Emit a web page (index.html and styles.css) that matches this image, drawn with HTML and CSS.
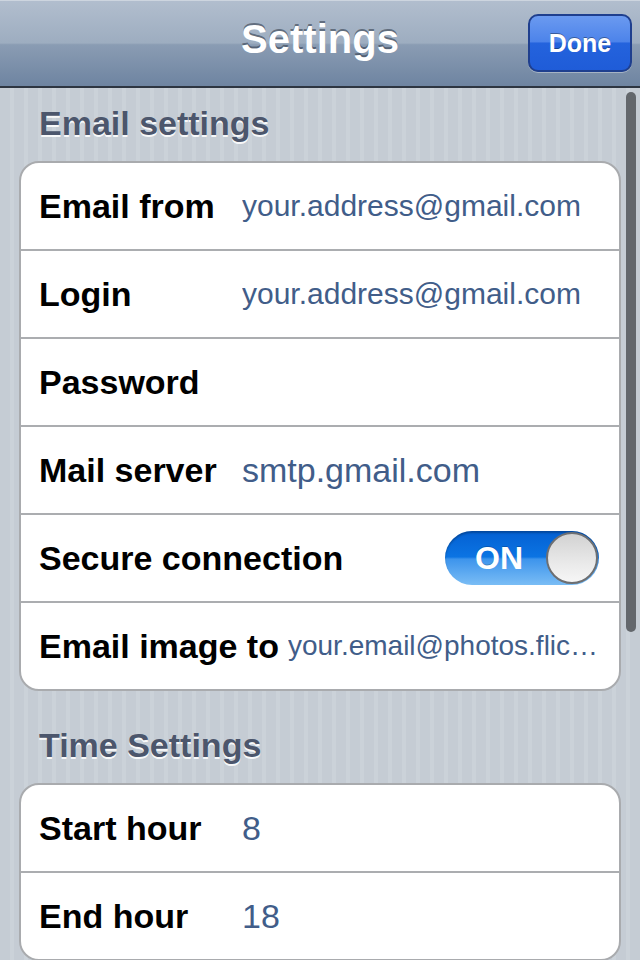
FILE: index.html
```html
<!DOCTYPE html>
<html lang="en">
<head>
<meta charset="utf-8">
<title>Settings</title>
<link rel="stylesheet" href="styles.css">
</head>
<body>
<header class="navbar">
  <span></span>
  <h1 class="nav-title">Settings</h1>
  <button class="done-btn">Done</button>
</header>
<main class="content">
  <section class="group">
    <h2 class="group-title">Email settings</h2>
    <ul class="card">
      <li class="row"><span class="label">Email from</span><span class="value value-fit">your.address@gmail.com</span></li>
      <li class="row"><span class="label">Login</span><span class="value value-fit">your.address@gmail.com</span></li>
      <li class="row"><span class="label">Password</span><span class="value"></span></li>
      <li class="row"><span class="label">Mail server</span><span class="value">smtp.gmail.com</span></li>
      <li class="row row-switch"><span class="label">Secure connection</span>
        <span class="switch"><span class="switch-text">ON</span><span class="knob"></span></span>
      </li>
      <li class="row row-tight"><span class="label">Email image to</span><span class="value value-small">your.email@photos.flickr.com</span></li>
    </ul>
  </section>
  <section class="group group-second">
    <h2 class="group-title">Time Settings</h2>
    <ul class="card">
      <li class="row"><span class="label">Start hour</span><span class="value">8</span></li>
      <li class="row"><span class="label">End hour</span><span class="value">18</span></li>
    </ul>
  </section>
</main>
<div class="scrollbar"></div>
</body>
</html>
```
FILE: styles.css
```css
html, body {
  margin: 0;
  padding: 0;
}
body {
  width: 640px;
  height: 960px;
  overflow: hidden;
  position: relative;
  font-family: "Liberation Sans", Arial, Helvetica, sans-serif;
  background-color: #c5ccd4;
  background-image: repeating-linear-gradient(90deg, #c5ccd4 0px, #c5ccd4 10px, #cbd2d9 10px, #cbd2d9 14px);
}
.navbar {
  height: 86px;
  border-bottom: 2px solid #2d3541;
  display: grid;
  grid-template-columns: 1fr auto 1fr;
  align-items: center;
  background: linear-gradient(to bottom, #b2bece 0%, #9dadc0 50%, #8a9cb3 52%, #6e84a1 100%);
  box-shadow: inset 0 1px 0 #cdd5df;
}
.nav-title {
  margin: 0;
  padding-bottom: 8px;
  font-size: 40px;
  line-height: 40px;
  font-weight: bold;
  color: #fff;
  text-shadow: 0 -2px 0 rgba(40, 50, 65, 0.55);
}
.done-btn {
  justify-self: end;
  margin-right: 8px;
  width: 104px;
  height: 58px;
  border: 2px solid #1f3f8e;
  border-radius: 10px;
  background: linear-gradient(to bottom, #6b9af0 0%, #4c83ea 48%, #2463dd 50%, #1f5cd8 100%);
  color: #fff;
  font-family: "Liberation Sans", Arial, sans-serif;
  font-weight: bold;
  font-size: 25px;
  text-shadow: 0 -1px 0 rgba(0, 0, 0, 0.35);
  box-shadow: 0 1px 0 rgba(255, 255, 255, 0.35);
  padding: 0;
}
.content {
  padding: 15px 19px 0 19px;
}
.group-second {
  margin-top: 34px;
}
.group-title {
  margin: 0 0 18px 20px;
  height: 40px;
  font-size: 34px;
  line-height: 40px;
  font-weight: bold;
  color: #4c566c;
  text-shadow: 0 2px 0 rgba(255, 255, 255, 0.9);
}
.card {
  list-style: none;
  margin: 0;
  padding: 0;
  background: #fff;
  border: 2px solid #a9abae;
  border-radius: 20px;
  overflow: hidden;
}
.row {
  height: 86px;
  display: flex;
  align-items: center;
  padding: 0 20px 0 18px;
  border-top: 2px solid #abadb0;
}
.row:first-child {
  border-top: none;
}
.row-tight {
  padding-right: 17px;
}
.label {
  min-width: 194px;
  margin-right: 9px;
  flex-shrink: 0;
  font-size: 34px;
  font-weight: bold;
  color: #000;
  white-space: nowrap;
}
.value {
  flex: 1;
  min-width: 0;
  font-size: 34px;
  color: #415d89;
  white-space: nowrap;
  overflow: hidden;
  text-overflow: ellipsis;
}
.value-fit {
  font-size: 30px;
}
.value-small {
  font-size: 28px;
}
.row-switch {
  justify-content: space-between;
}
.switch {
  width: 154px;
  height: 54px;
  border-radius: 27px;
  box-sizing: border-box;
  display: flex;
  align-items: center;
  justify-content: space-between;
  background: linear-gradient(to bottom, #0460d2 0%, #0b74e3 48%, #3d94ec 52%, #7abdf5 100%);
  box-shadow: inset 0 2px 2px rgba(0, 0, 0, 0.25);
}
.switch-text {
  padding-left: 30px;
  font-size: 32px;
  font-weight: bold;
  color: #fff;
  text-shadow: 0 -1px 0 rgba(0, 0, 0, 0.2);
}
.knob {
  width: 52px;
  height: 52px;
  margin-right: 1px;
  border-radius: 50%;
  box-sizing: border-box;
  border: 2px solid #6d6f72;
  background: linear-gradient(to bottom, #d2d2d2 0%, #e9e9e9 60%, #f6f6f6 100%);
}
.scrollbar {
  position: absolute;
  left: 626px;
  top: 92px;
  width: 10px;
  height: 540px;
  border-radius: 5px;
  background: #63676c;
}
```
